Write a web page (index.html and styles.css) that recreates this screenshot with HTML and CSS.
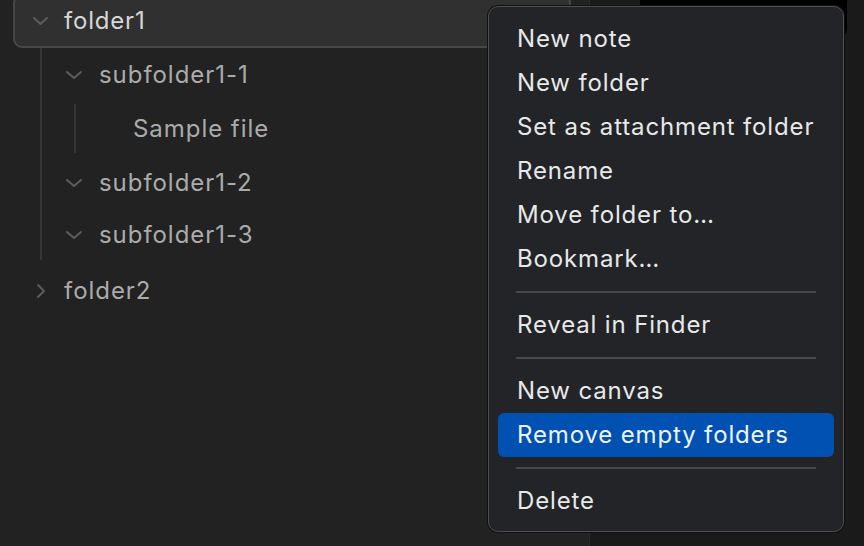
FILE: index.html
```html
<!DOCTYPE html>
<html>
<head>
<meta charset="utf-8">
<link rel="stylesheet" href="styles.css">
</head>
<body>
<div class="app">
  <aside class="sidebar">
    <div class="tree">
      <div class="row top active">
        <svg class="chev" width="15" height="8" viewBox="0 0 15 8"><path d="M1 1 L7.5 7 L14 1" fill="none" stroke="#5c5c5c" stroke-width="2" stroke-linecap="round" stroke-linejoin="round"/></svg>
        <span class="label strong">folder1</span>
      </div>
      <div class="children lvl1">
        <div class="row sub">
          <svg class="chev" width="16" height="8" viewBox="0 0 16 8"><path d="M1 1 L8 7 L15 1" fill="none" stroke="#5c5c5c" stroke-width="2" stroke-linecap="round" stroke-linejoin="round"/></svg>
          <span class="label">subfolder1-1</span>
        </div>
        <div class="children lvl2">
          <div class="row file"><span class="label">Sample file</span></div>
        </div>
        <div class="row sub">
          <svg class="chev" width="16" height="8" viewBox="0 0 16 8"><path d="M1 1 L8 7 L15 1" fill="none" stroke="#5c5c5c" stroke-width="2" stroke-linecap="round" stroke-linejoin="round"/></svg>
          <span class="label">subfolder1-2</span>
        </div>
        <div class="row sub">
          <svg class="chev" width="16" height="8" viewBox="0 0 16 8"><path d="M1 1 L8 7 L15 1" fill="none" stroke="#5c5c5c" stroke-width="2" stroke-linecap="round" stroke-linejoin="round"/></svg>
          <span class="label">subfolder1-3</span>
        </div>
      </div>
      <div class="row top">
        <svg class="chev right" width="15" height="16" viewBox="0 0 15 16"><path d="M5 2 L11 8 L5 14" fill="none" stroke="#5c5c5c" stroke-width="2" stroke-linecap="round" stroke-linejoin="round"/></svg>
        <span class="label">folder2</span>
      </div>
    </div>
  </aside>
  <main class="pane"></main>
</div>
<div class="backdrop-window"></div>
<div class="menu">
  <div class="mi">New note</div>
  <div class="mi">New folder</div>
  <div class="mi">Set as attachment folder</div>
  <div class="mi">Rename</div>
  <div class="mi">Move folder to…</div>
  <div class="mi">Bookmark…</div>
  <div class="sep"></div>
  <div class="mi">Reveal in Finder</div>
  <div class="sep"></div>
  <div class="mi">New canvas</div>
  <div class="mi selected">Remove empty folders</div>
  <div class="sep"></div>
  <div class="mi">Delete</div>
</div>
</body>
</html>
```

FILE: styles.css
```css
* { box-sizing: border-box; }
html, body {
  margin: 0;
  padding: 0;
  width: 864px;
  height: 546px;
  overflow: hidden;
  background: #1a1a1a;
  font-family: Inter, "Noto Sans", sans-serif;
}
.app {
  display: flex;
  width: 864px;
  height: 546px;
}
.sidebar {
  width: 590px;
  flex: none;
  background: #222222;
  border-right: 1px solid #2c2c2c;
  padding: 0 18px 0 13px;
}
.pane {
  flex: 1;
  background: #1a1a1a;
}
.tree {
  margin-top: -6px;
  display: flex;
  flex-direction: column;
}
.row {
  height: 54px;
  display: flex;
  align-items: center;
  flex: none;
}
.label {
  font-size: 24px;
  color: #ababab;
  letter-spacing: 0.95px;
  white-space: nowrap;
  padding-bottom: 1px;
}
.label.strong { color: #d6d6d6; letter-spacing: 0.8px; }
.row.top {
  border: 2px solid transparent;
  border-radius: 9px;
  padding-left: 18px;
}
.row.top .chev { margin-right: 16px; }
.row.active {
  background: #303030;
  border-color: #474747;
}
.children {
  display: flex;
  flex-direction: column;
}
.children.lvl1 {
  margin-left: 27px;
  border-left: 2px solid #363636;
  margin-bottom: 4px;
}
.children.lvl1 > .row:last-child { height: 50px; }
.row.sub { padding-left: 24px; }
.row.sub .chev { margin-right: 17px; }
.children.lvl2 {
  margin-left: 32px;
  padding: 2px 0 3px;
}
.children.lvl2 .row.file {
  height: 49px;
  border-left: 2px solid #363636;
  padding-left: 57px;
}
.backdrop-window {
  position: absolute;
  left: 640px;
  top: -20px;
  width: 207px;
  height: 60px;
  background: #000;
  border-radius: 12px;
}
.menu {
  position: absolute;
  left: 488px;
  top: 6px;
  width: 356px;
  height: 526px;
  background: #222427;
  border: 1px solid #4f5052;
  border-radius: 10px;
  padding: 10px 9px 8px;
  display: flex;
  flex-direction: column;
  box-shadow: 0 0 0 1px #111;
}
.mi {
  height: 44px;
  flex: none;
  display: flex;
  align-items: center;
  padding-left: 19px;
  padding-bottom: 1px;
  font-size: 24px;
  letter-spacing: 0.85px;
  color: #e8e8e8;
  border-radius: 6px;
  white-space: nowrap;
}
.mi.selected {
  background: #0151b3;
  color: #eef2fa;
}
.sep {
  height: 22px;
  flex: none;
  display: flex;
  align-items: center;
  margin: 0 18px;
}
.sep::after {
  content: "";
  display: block;
  width: 100%;
  height: 2px;
  background: #47494b;
}
```
